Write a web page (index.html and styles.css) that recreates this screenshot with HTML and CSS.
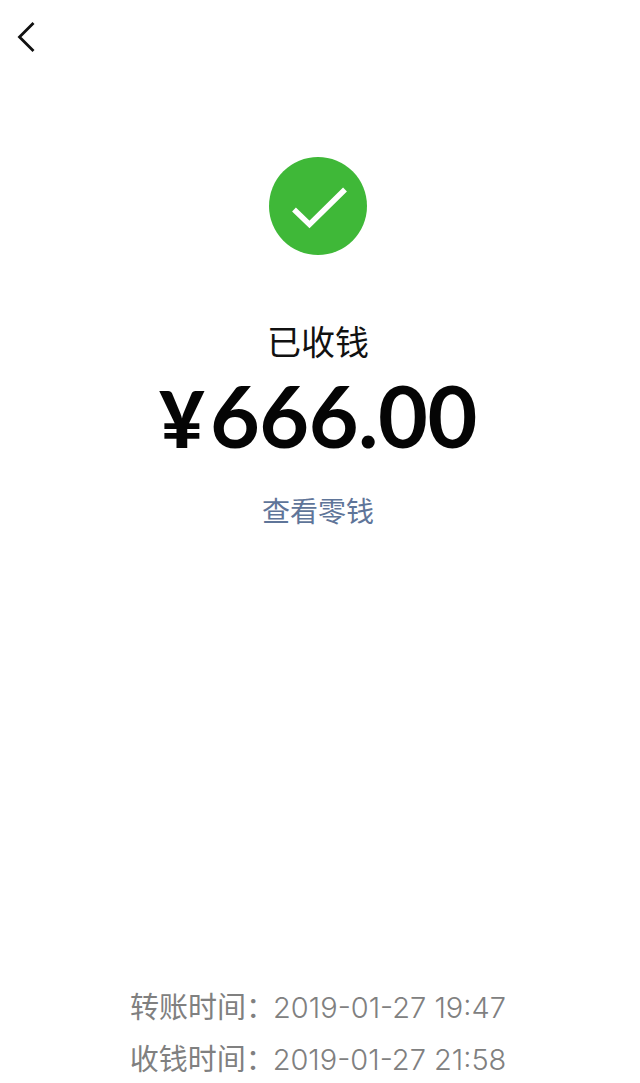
FILE: index.html
```html
<!DOCTYPE html>
<html lang="zh">
<head>
<meta charset="utf-8">
<title>已收钱</title>
<link rel="stylesheet" href="styles.css">
</head>
<body>
<main class="page">
  <header class="nav">
    <svg class="back" width="20" height="32" viewBox="0 0 20 32"><path d="M16.500 2 2.500 16 16.500 30" fill="none" stroke="#111" stroke-width="2.800"/></svg>
  </header>
  <section class="status">
    <svg class="ok" width="98" height="98" viewBox="0 0 98 98"><circle cx="49" cy="49" r="49" fill="#3fb838"/><path d="M25 52.500 40.500 67.500 76 32.500" fill="none" stroke="#fff" stroke-width="5.500"/></svg>
    <h1 class="title">已收钱</h1>
    <p class="amount"><span class="yen">¥</span>666.00</p>
    <a class="link">查看零钱</a>
  </section>
  <footer class="times">
    <p class="time">转账时间：<span class="num">2019-01-27 19:47</span></p>
    <p class="time">收钱时间：<span class="num">2019-01-27 21:58</span></p>
  </footer>
</main>
</body>
</html>
```
FILE: styles.css
```css
html, body { margin: 0; padding: 0; background: #fff; }
.page {
  width: 640px;
  height: 1083px;
  box-sizing: border-box;
  padding-right: 4px;
  overflow: hidden;
  display: flex;
  flex-direction: column;
  font-family: "Noto Sans CJK SC", "Inter", sans-serif;
}
.nav { flex: none; height: 157px; padding: 21px 0 0 17px; box-sizing: border-box; }
.back { display: block; }
.status { flex: none; display: flex; flex-direction: column; align-items: center; }
.ok { display: block; flex: none; }
.title { margin: 61px 0 0; font-size: 34px; line-height: 50px; font-weight: 400; color: #111; }
.amount {
  margin: 5px 0 0;
  height: 88px;
  font-family: "Lato", sans-serif;
  font-size: 86px;
  line-height: 88px;
  font-weight: 700;
  letter-spacing: -0.500px;
  color: #050505;
}
.yen { font-size: 78px; font-weight: 900; line-height: 1; margin-right: 6px; }
.link { margin-top: 30px; font-size: 28px; line-height: 42px; color: #5f7599; }
.times { flex: none; margin-top: 448px; display: flex; flex-direction: column; align-items: center; }
.time { margin: 0; height: 52px; font-size: 29px; line-height: 52px; color: #808080; white-space: nowrap; }
.num { margin-left: -2px; font-family: "Inter", sans-serif; font-weight: 300; font-size: 29px; line-height: 1; }
```
